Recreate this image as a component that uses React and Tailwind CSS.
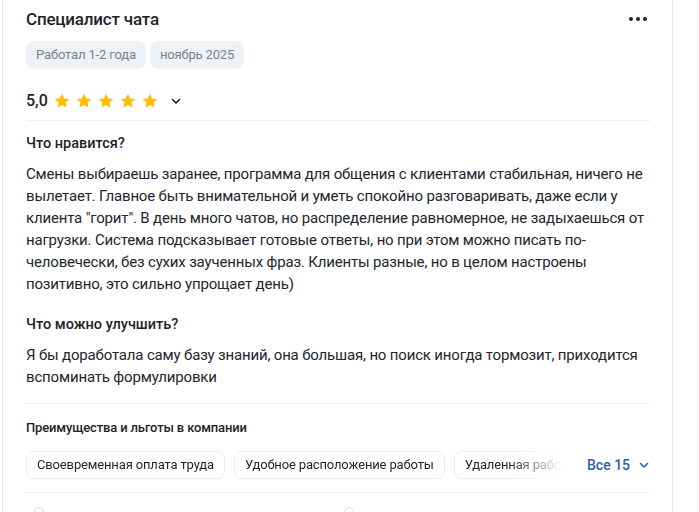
import React from "react";

function Star() {
  return (
    <svg width="18" height="18" viewBox="0 0 24 24" className="shrink-0">
      <path
        d="M12 2.2l2.95 6.3 6.85.78-5.1 4.67 1.4 6.78L12 17.3l-6.1 3.43 1.4-6.78-5.1-4.67 6.85-.78z"
        fill="#ffbd00"
      />
    </svg>
  );
}

function Chevron({ className = "", color = "#1f2229" }) {
  return (
    <svg width="12" height="12" viewBox="0 0 12 12" className={className}>
      <path d="M2.5 4.5L6 8l3.5-3.5" fill="none" stroke={color} strokeWidth="1.6" strokeLinecap="round" strokeLinejoin="round" />
    </svg>
  );
}

export default function App() {
  const font = { fontFamily: "Roboto, 'Noto Sans', sans-serif" };
  return (
    <div className="w-[699px] h-[512px] overflow-hidden bg-white" style={font}>
      <div className="ml-[2px] w-[671px] h-[540px] -mt-[20px] border-x border-[#e3e8f0] bg-white pl-[23px] pr-[22px] pt-[27px] text-[#1f2229]">
        <div className="flex items-start justify-between">
          <div className="text-[17px] font-medium leading-[24px] tracking-[-0.2px]">Специалист чата</div>
          <div className="flex gap-[3px] pt-[10px] pr-[3px]">
            <span className="w-[4px] h-[4px] rounded-full bg-[#1f2229]" />
            <span className="w-[4px] h-[4px] rounded-full bg-[#1f2229]" />
            <span className="w-[4px] h-[4px] rounded-full bg-[#1f2229]" />
          </div>
        </div>
        <div className="flex gap-[4px] mt-[10px]">
          <span className="h-[28px] px-[10px] rounded-lg bg-[#eef1f6] text-[13px] tracking-[-0.15px] text-[#7a8291] leading-[28px]">Работал 1-2 года</span>
          <span className="h-[28px] px-[10px] rounded-lg bg-[#eef1f6] text-[13px] tracking-[-0.15px] text-[#7a8291] leading-[28px]">ноябрь 2025</span>
        </div>
        <div className="flex items-center mt-[20px] h-[24px]">
          <span className="text-[16px] font-medium mr-[5px]">5,0</span>
          <div className="flex gap-[4px]">
            <Star /><Star /><Star /><Star /><Star />
          </div>
          <Chevron className="ml-[11px]" />
        </div>
        <div className="h-px bg-[#eef0f3] mt-[7px]" />
        <div className="text-[14.5px] font-medium leading-[20px] mt-[13px]">Что нравится?</div>
        <p className="text-[15px] leading-[22px] mt-[9px] tracking-[-0.17px] text-[#23262d]">
          Смены выбираешь заранее, программа для общения с клиентами стабильная, ничего не вылетает. Главное быть внимательной и уметь спокойно разговаривать, даже если у клиента "горит". В день много чатов, но распределение равномерное, не задыхаешься от нагрузки. Система подсказывает готовые ответы, но при этом можно писать по-человечески, без сухих заученных фраз. Клиенты разные, но в целом настроены позитивно, это сильно упрощает день)
        </p>
        <div className="text-[14.5px] font-medium leading-[20px] mt-[20px]">Что можно улучшить?</div>
        <p className="text-[15px] leading-[22px] mt-[9px] tracking-[-0.17px] text-[#23262d]">
          Я бы доработала саму базу знаний, она большая, но поиск иногда тормозит, приходится вспоминать формулировки
        </p>
        <div className="h-px bg-[#eef0f3] mt-[15px]" />
        <div className="text-[13px] font-medium leading-[18px] mt-[15px] tracking-[-0.15px]">Преимущества и льготы в компании</div>
        <div className="flex items-center mt-[14px]">
          <div
            className="flex gap-[9px] w-[536px] shrink-0 overflow-hidden"
            style={{ WebkitMaskImage: "linear-gradient(to right, black 90%, transparent 100%)", maskImage: "linear-gradient(to right, black 90%, transparent 100%)" }}
          >
            <span className="shrink-0 h-[28px] px-[10px] rounded-lg border border-[#e9ecf1] text-[13px] tracking-[-0.15px] leading-[26px] whitespace-nowrap">Своевременная оплата труда</span>
            <span className="shrink-0 h-[28px] px-[10px] rounded-lg border border-[#e9ecf1] text-[13px] tracking-[-0.15px] leading-[26px] whitespace-nowrap">Удобное расположение работы</span>
            <span className="shrink-0 h-[28px] px-[10px] rounded-lg border border-[#e9ecf1] text-[13px] tracking-[-0.15px] leading-[26px] whitespace-nowrap">Удаленная работа</span>
          </div>
          <button className="flex shrink-0 items-center ml-[25px] text-[14px] font-medium text-[#2d5eb5] whitespace-nowrap">
            Все 15
            <Chevron className="ml-[8px]" color="#2d5eb5" />
          </button>
        </div>
        <div className="h-px bg-[#eef0f3] mt-[13px]" />
        <div className="flex items-center mt-[14px] gap-[300px] pl-[8px]">
          <span className="w-[10px] h-[10px] rounded-full border border-[#d5d9e0]" />
          <span className="w-[10px] h-[10px] rounded-full border border-[#d5d9e0]" />
        </div>
      </div>
    </div>
  );
}
